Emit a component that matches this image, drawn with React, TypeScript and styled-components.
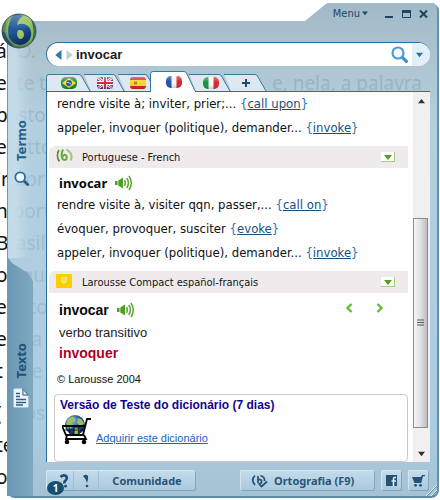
import React, { useId } from 'react';
import styled, { createGlobalStyle } from 'styled-components';

const UI_FONT = '"Noto Sans", "Open Sans", sans-serif';
const BODY_FONT = '"DejaVu Sans Condensed", "Noto Sans", sans-serif';
const ARIAL = '"Liberation Sans", Arial, sans-serif';

const GlobalStyle = createGlobalStyle`
  * { box-sizing: border-box; }
  body { margin: 0; background: #fff; font-family: ${UI_FONT}; color: #111; }
  button, input { font: inherit; color: inherit; margin: 0; padding: 0; border: 0; background: none; }
  button { cursor: pointer; }
  svg { display: block; flex: none; }
`;

const Desktop = styled.div`
  position: relative;
  display: flex;
  min-height: 100vh;
  padding: 2px 1px 2px 7px;
  overflow: hidden;
`;

const Backdrop = styled.div`
  position: absolute;
  inset: 35px 18px auto -4px;
  display: flex;
  flex-direction: column;
  color: #111;
  font-size: 19px;
  line-height: 32px;
  white-space: pre;
`;

const BackdropLine = styled.div<{ $gap?: boolean }>`
  display: flex;
  justify-content: space-between;
  height: 32px;
  margin-top: ${p => (p.$gap ? 10 : 0)}px;
`;

const Frame = styled.div`
  position: relative;
  flex: 1;
  min-width: 0;
  display: grid;
  grid-template-columns: 39px minmax(0, 1fr);
  grid-template-rows: 40px minmax(0, 1fr);
  padding-right: 7px;
  border-radius: 0 8px 8px 8px;
  border-right: 2px solid #5f93b3;
  border-bottom: 2px solid #5b8daa;
  background: linear-gradient(180deg, rgba(156, 181, 197, .95) 0, rgba(165, 188, 202, .91) 50px, rgba(171, 202, 220, .91) 120px, rgba(167, 201, 222, .94) 85%, rgba(160, 192, 210, .96) 100%);
  clip-path: polygon(0 19px, calc(100% - 134px) 19px, calc(100% - 112px) 1px, calc(100% - 5px) 1px, 100% 6px, 100% 100%, 0 100%);
`;

const TitleBar = styled.header`
  grid-column: 1 / -1;
  display: flex;
  justify-content: flex-end;
  align-items: flex-start;
  gap: 8px;
  padding: 1px 2px 0 0;
`;

const MenuButton = styled.button`
  display: flex;
  align-items: center;
  gap: 2px;
  height: 20px;
  margin-right: 9px;
  font-family: ${BODY_FONT};
  font-size: 11px;
  color: #1d4866;
`;

const WindowButton = styled.button`
  display: grid;
  place-items: center;
  width: 9px;
  height: 22px;
  color: #1d4561;
`;

const Logo = styled.div`
  position: absolute;
  left: 1px;
  top: 13px;
`;

const Rail = styled.nav`
  display: flex;
  flex-direction: column;
  border-left: 1px solid #6e9ab5;
`;

const RailTab = styled.button<{ $dark?: boolean }>`
  display: flex;
  flex-direction: column;
  align-items: center;
  gap: 10px;
  width: 26px;
  flex: ${p => (p.$dark ? '1 1 0' : '0 0 216px')};
  padding-top: ${p => (p.$dark ? 85 : 78)}px;
  color: ${p => (p.$dark ? '#1c5279' : '#23608c')};
  font-size: 13px;
  font-weight: 700;
  background: ${p =>
    p.$dark
      ? 'linear-gradient(90deg, #6c98b4, #7fa8c0)'
      : 'linear-gradient(90deg, #c3dae8, rgba(200, 222, 235, .85) 30%, rgba(190, 215, 230, .3) 70%, transparent)'};
  clip-path: ${p => (p.$dark ? 'polygon(0 0, 4px 5px, 20px 15px, 25px 23px, 25px 100%, 0 100%)' : 'none')};
`;

const RailLabel = styled.span`
  writing-mode: vertical-rl;
  rotate: 180deg;
  line-height: 18px;
`;

const Main = styled.main`
  display: flex;
  flex-direction: column;
  min-width: 0;
`;

const SearchBar = styled.form`
  display: flex;
  align-items: center;
  height: 24px;
  margin: 0;
  padding-left: 7px;
  border-top: 1px solid #2a6f9b;
  border-left: 1px solid #2a6f9b;
  border-radius: 12px;
  background: #fff;
  overflow: hidden;
`;

const SearchInput = styled.input`
  flex: 1;
  min-width: 0;
  margin-left: 2px;
  font-family: ${ARIAL};
  font-size: 13px;
  font-weight: 700;
  color: #1b1b1b;
  outline: none;
`;

const NavButton = styled.button`
  display: grid;
  place-items: center;
  width: 10px;
  height: 20px;
`;

const SearchButton = styled.button`
  display: grid;
  place-items: center;
  width: 18px;
  height: 22px;
  margin-right: 4px;
`;

const SearchMore = styled.button`
  display: grid;
  place-items: center;
  align-self: stretch;
  width: 18px;
  padding-right: 3px;
  background: #e3eff7;
`;

const Tabs = styled.div`
  display: flex;
  align-items: flex-end;
  height: 26px;
  border-bottom: 1px solid #2a6f9b;
`;

const TabButton = styled.button<{ $active?: boolean; $width: number }>`
  position: relative;
  z-index: ${p => (p.$active ? 1 : 0)};
  display: grid;
  align-items: center;
  justify-items: center;
  width: ${p => p.$width}px;
  height: ${p => (p.$active ? 21 : 17)}px;
  margin-bottom: ${p => (p.$active ? -1 : 0)}px;
  > * { grid-area: 1 / 1; }
`;

const TabShape = styled.svg`
  justify-self: start;
  align-self: end;
  overflow: visible;
`;

const TabIcon = styled.span`
  position: relative;
  padding-left: 8px;
`;

const Panel = styled.section`
  flex: 1;
  display: flex;
  border-left: 1px solid #2a6f9b;
  background: #fefefe;
`;

const Entries = styled.div`
  flex: 1;
  min-width: 0;
  padding: 0 5px 0 2px;
`;

const Line = styled.p`
  margin: 0;
  padding-left: 8px;
  font-family: ${BODY_FONT};
  font-size: 13px;
  line-height: 24px;
  white-space: nowrap;
  color: #111;
`;

const Brace = styled.span`
  color: #1c78b0;
`;

const EntryLink = styled.a`
  color: #1a4e80;
  text-decoration: underline;
`;

const DictHeader = styled.h2`
  display: flex;
  align-items: center;
  height: 22px;
  margin: 6px 0 0;
  padding: 0 13px 0 7px;
  border-radius: 6px 0 0 0;
  background: #efebed;
  font-family: ${BODY_FONT};
  font-size: 11px;
  font-weight: 400;
  color: #151515;
`;

const DictIcon = styled.span`
  width: 26px;
  margin-bottom: 3px;
`;

const DictName = styled.span`
  flex: 1;
`;

const FoldButton = styled.button`
  display: grid;
  place-items: center;
  width: 14px;
  height: 10px;
  background: #fff;
  border-right: 1px solid #a3cd85;
  border-bottom: 1px solid #a3cd85;
`;

const Headword = styled.h3<{ $arial?: boolean }>`
  display: flex;
  align-items: center;
  gap: 8px;
  height: ${p => (p.$arial ? 26 : 20)}px;
  margin: ${p => (p.$arial ? 4 : 5)}px 0 0;
  padding: 0 24px 0 10px;
  font-family: ${p => (p.$arial ? ARIAL : UI_FONT)};
  font-size: ${p => (p.$arial ? 14 : 13)}px;
  font-weight: 700;
  color: #080808;
`;

const Pager = styled.span`
  display: flex;
  gap: 23px;
  margin-left: auto;
  padding-bottom: 4px;
`;

const PagerButton = styled.button`
  display: grid;
  place-items: center;
  width: 8px;
  height: 14px;
`;

const SenseLine = styled.p<{ $strong?: boolean }>`
  margin: 0;
  padding-left: 10px;
  font-family: ${ARIAL};
  font-size: ${p => (p.$strong ? 14 : 13)}px;
  font-weight: ${p => (p.$strong ? 700 : 400)};
  line-height: 20px;
  color: ${p => (p.$strong ? '#ae0025' : '#1c1c1c')};
`;

const Copyright = styled.p`
  margin: 9px 0 8px;
  padding-left: 8px;
  font-family: ${ARIAL};
  font-size: 11px;
  line-height: 14px;
`;

const TrialBox = styled.aside`
  height: 68px;
  margin: 0 0 0 5px;
  padding: 3px 5px;
  border: 1px solid #ccc;
  border-radius: 4px;
  font-family: ${ARIAL};
  font-size: 11px;
`;

const TrialTitle = styled.strong`
  display: block;
  font-size: 12px;
  line-height: 14px;
  color: #15048f;
`;

const TrialBody = styled.div`
  display: flex;
  align-items: flex-end;
  gap: 4px;
  margin-top: 2px;
  padding-left: 2px;
`;

const TrialLink = styled.a`
  line-height: 13px;
  color: #1766c4;
`;

const ScrollBar = styled.div`
  display: flex;
  flex-direction: column;
  align-items: stretch;
  width: 17px;
  background: #f1eff0;
`;

const ScrollArrow = styled.button`
  display: grid;
  place-items: center;
  height: 18px;
`;

const ScrollTrack = styled.div`
  flex: 1;
  display: flex;
  flex-direction: column;
  justify-content: flex-end;
  padding-bottom: 16px;
`;

const ScrollThumb = styled.div`
  height: 66%;
  display: grid;
  place-items: center;
  margin-right: 2px;
  border: 1px solid #8c8c90;
  background: linear-gradient(90deg, #f6f6f8, #e0e0e5 50%, #bcbcc4);
`;

const Footer = styled.footer`
  display: flex;
  align-items: center;
  gap: 7px;
  height: 34px;
  padding: 2px 2px 0 0;
`;

const bevel = `
  background: linear-gradient(180deg, #c3dbea, #acc9dc);
  border-top: 1px solid #d5e6f0;
  border-left: 1px solid #d5e6f0;
  box-shadow: 1px 1px 0 #7ea7c0;
  border-radius: 2px;
`;

const ButtonGroup = styled.div`
  position: relative;
  display: flex;
  height: 20px;
  width: 149px;
  margin-right: auto;
  ${bevel}
`;

const GroupItem = styled.button<{ $width?: number; $first?: boolean }>`
  display: grid;
  place-items: center;
  flex: ${p => (p.$width ? `0 0 ${p.$width}px` : '1')};
  padding-left: ${p => (p.$first ? 8 : 0)}px;
  border-left: ${p => (p.$first ? '0' : '1px solid #9fbfd3')};
  font-size: 11px;
  font-weight: 700;
  line-height: 18px;
  color: #275578;
`;

const CountBadge = styled.span`
  position: absolute;
  left: 0;
  bottom: -5px;
  width: 17px;
  height: 14px;
  border-radius: 50%;
  background: #155070;
  color: #fff;
  font-size: 10px;
  font-weight: 700;
  line-height: 14px;
  text-align: center;
`;

const FooterButton = styled.button<{ $width: number }>`
  display: flex;
  align-items: center;
  justify-content: center;
  gap: 6px;
  width: ${p => p.$width}px;
  height: 20px;
  font-size: 11px;
  font-weight: 700;
  line-height: 18px;
  color: #275578;
  ${bevel}
`;

const SpellButton = styled(FooterButton)`
  justify-content: flex-start;
  padding-left: 10px;
`;

const ResizeGrip = styled.div`
  position: absolute;
  right: 0;
  bottom: 0;
`;

function Triangle({ dir, color, w = 6 }: { dir: 'up' | 'down' | 'left' | 'right'; color: string; w?: number }) {
  const turn = { down: 0, left: 90, up: 180, right: 270 }[dir];
  return (
    <svg width={w} height={w} viewBox="0 0 8 8">
      <path d="M0 2h8L4 7z" fill={color} transform={`rotate(${turn} 4 4)`} />
    </svg>
  );
}

function Lens({ size, color, rim }: { size: number; color: string; rim: string }) {
  return (
    <svg width={size} height={size} viewBox="0 0 16 16">
      <path d="M10.5 10.5l4 4" stroke={color} strokeWidth="3" strokeLinecap="round" />
      <circle cx="6.6" cy="6.6" r="5.2" fill="#eef8fd" stroke={rim} strokeWidth="2" />
      <path d="M4 6.5A3 3 0 0 1 7 4" fill="none" stroke="#fff" strokeWidth="1.4" />
    </svg>
  );
}

function BabelLogo() {
  return (
    <svg width="36" height="36" viewBox="0 0 36 36">
      <defs>
        <radialGradient id="ball" cx=".55" cy=".45" r=".6">
          <stop offset="0" stopColor="#a9d05a" />
          <stop offset=".65" stopColor="#8aba55" />
          <stop offset="1" stopColor="#2b5140" />
        </radialGradient>
        <linearGradient id="sea" x1="0" y1="0" x2=".3" y2="1">
          <stop offset="0" stopColor="#1f5583" />
          <stop offset=".5" stopColor="#225da0" />
          <stop offset="1" stopColor="#0f2f68" />
        </linearGradient>
        <linearGradient id="shine" x1="0" y1="0" x2="0" y2="1">
          <stop offset="0" stopColor="#fff" stopOpacity=".3" />
          <stop offset="1" stopColor="#fff" stopOpacity="0" />
        </linearGradient>
        <clipPath id="ballClip"><circle cx="18" cy="18" r="17" /></clipPath>
      </defs>
      <circle cx="18" cy="18" r="17" fill="url(#ball)" stroke="#314e56" strokeWidth=".8" />
      <g clipPath="url(#ballClip)">
        <path d="M0 20Q2 17 4 20Q6 27 12 32L10 36L0 30z" fill="#1f4f74" />
        <path
          fillRule="evenodd"
          d="M12 2Q17 0 22 3Q17 6 16 12Q22 9 27 13Q31 17 30 23Q28 31 20 32Q12 32 8 25Q5 13 12 2zM16.500 18Q15 24 19 26Q22.500 26 23 22Q23 18 20 17Q17.500 16.500 16.500 18z"
          fill="url(#sea)"
        />
        <path d="M29 4Q34 10 35 18Q35 25 30 31Q33 24 32.500 17Q32 10 29 4z" fill="#1d4a60" opacity=".7" />
      </g>
      <ellipse cx="18" cy="9" rx="13" ry="7" fill="url(#shine)" />
    </svg>
  );
}

type FlagKind = 'br' | 'gb' | 'es' | 'fr' | 'it';

function Flag({ kind }: { kind: FlagKind }) {
  const id = useId();
  return (
    <svg width="16" height="12" viewBox="0 0 16 12">
      <defs>
        <clipPath id={id}><rect width="16" height="12" rx={kind === 'es' || kind === 'gb' ? 3 : 5} /></clipPath>
        <linearGradient id={`${id}g`} x1="0" y1="0" x2="0" y2="1">
          <stop offset="0" stopColor="#fff" stopOpacity=".35" />
          <stop offset=".5" stopColor="#fff" stopOpacity="0" />
          <stop offset="1" stopColor="#000" stopOpacity=".2" />
        </linearGradient>
      </defs>
      <g clipPath={`url(#${id})`}>
        {kind === 'br' && (
          <>
            <path d="M0 0h16v12H0z" fill="#218a35" />
            <path d="M8 1l7 5-7 5-7-5z" fill="#f5e02c" />
            <circle cx="8" cy="6" r="2.9" fill="#1d4c9b" />
            <path d="M5.5 5.3q3 0 4.8 2" stroke="#fff" strokeWidth=".8" fill="none" />
          </>
        )}
        {kind === 'gb' && (
          <>
            <path d="M0 0h16v12H0z" fill="#2d4898" />
            <path d="M0 0l16 12M16 0L0 12" stroke="#fff" strokeWidth="2.6" />
            <path d="M0 0l16 12M16 0L0 12" stroke="#d5263d" strokeWidth="1" />
            <path d="M8 0v12M0 6h16" stroke="#fff" strokeWidth="4" />
            <path d="M8 0v12M0 6h16" stroke="#d5263d" strokeWidth="2.2" />
          </>
        )}
        {kind === 'es' && (
          <>
            <path d="M0 0h16v12H0z" fill="#d9231f" />
            <path d="M0 3h16v6H0z" fill="#fbd62b" />
            <path d="M4 4.5h3v3H4z" fill="#cf722b" />
          </>
        )}
        {(kind === 'fr' || kind === 'it') && (
          <>
            <path d="M0 0h16v12H0z" fill="#f6f8fa" />
            <path d="M0 0h5.5v12H0z" fill={kind === 'fr' ? '#1a52b0' : '#15923c'} />
            <path d="M10.5 0H16v12h-5.5z" fill="#d8232b" />
          </>
        )}
        <path d="M0 0h16v12H0z" fill={`url(#${id}g)`} />
      </g>
    </svg>
  );
}

function TabOutline({ width, active, first }: { width: number; active?: boolean; first?: boolean }) {
  const h = active ? 21 : 17;
  const left = active || first ? `M.5 ${h}V3Q.5 .5 3 .5` : `M0 .5`;
  const d = `${left}H${width - 5}Q${width - 3} .5 ${width - 2} 3L${width + 6} ${h - (active ? 1 : 0)}`;
  return (
    <TabShape width={width} height={h} aria-hidden>
      <path d={`${d}V${h}H${first || active ? 0 : 7}Z`} fill={active ? '#fff' : '#dce9f1'} />
      <path d={d} fill="none" stroke="#3b789e" />
    </TabShape>
  );
}

function Plus() {
  return <svg width="10" height="10"><path d="M5 1v8M1 5h8" stroke="#204a69" strokeWidth="2" /></svg>;
}

function Speaker() {
  return (
    <svg width="18" height="16" viewBox="0 0 18 16" fill="none" stroke="#5aa52f" strokeWidth="1.5">
      <path d="M0 6h2.5v4H0zM3.3 5.5L8 2.5v11L3.3 10.5z" fill="#4f9e27" stroke="none" />
      <path d="M9.5 5.2q1.6 2.8 0 5.6M11.8 3q3.2 5 0 10M14 1q4.6 7 0 14" />
    </svg>
  );
}

function BabelMark() {
  return (
    <svg width="17" height="16" viewBox="0 0 17 16" fill="none" stroke="#67ad38">
      <path d="M3 2Q-.5 8 3.5 13.5" stroke="#4c8d2c" strokeWidth="1.6" />
      <path d="M7 1.500Q4.500 7 6.500 11M6.500 8.500Q8 5.500 10.500 8Q11.500 11.500 8.500 12Q6 12 6.500 8.500z" strokeWidth="2" />
      <path d="M10.500 1.500Q18 6 14.500 12.500" stroke="#9bc87c" strokeWidth="2" />
    </svg>
  );
}

function LarousseMark() {
  return (
    <svg width="16" height="14" viewBox="0 0 16 14">
      <path d="M0 0h16v14H0z" fill="#fbcf00" />
      <path d="M5.500 3v4q0 1.500 1.500 1.500V3M9 3v5.500q1.500 0 1.500-1.500V3M8 2.500V10" fill="none" stroke="#fff4b0" strokeWidth=".8" />
    </svg>
  );
}

function Chevron({ dir }: { dir: 'left' | 'right' }) {
  return (
    <svg width="8" height="10" viewBox="0 0 8 10">
      <path d={dir === 'left' ? 'M6.500 1L2.500 5l4 4' : 'M1.500 1l4 4-4 4'} fill="none" stroke="#66bd30" strokeWidth="2.400" />
    </svg>
  );
}

function GlobeCart() {
  return (
    <svg width="30" height="31" viewBox="0 0 30 31">
      <defs>
        <radialGradient id="globe" cx=".4" cy=".3" r=".75">
          <stop offset="0" stopColor="#8dbbe4" />
          <stop offset=".5" stopColor="#24579b" />
          <stop offset="1" stopColor="#0a1c46" />
        </radialGradient>
      </defs>
      <circle cx="13" cy="11" r="10" fill="url(#globe)" />
      <path d="M5 6Q8 2 12 3L14 6L10 8L11 12L7 16Q3 12 5 6zM16 4Q21 5 22 10L18 12L15 9zM13 14l5 1-2 5-4 0z" fill="#9dbd62" />
      <path d="M0 12h23M29 5h-4l-4 16H4L0 12M5 21l-1 4h20l-2-4" fill="none" stroke="#080808" strokeWidth="1.800" />
      <path d="M2 16h20M7 13l1 8M12 13v8M17 13l-1 8" fill="none" stroke="#080808" strokeWidth=".8" />
      <circle cx="5" cy="28" r="2.300" fill="#080808" />
      <circle cx="22" cy="28" r="2.300" fill="#080808" />
    </svg>
  );
}

function PageIcon() {
  return (
    <svg width="16" height="20" viewBox="0 0 16 20">
      <path d="M1 1h8v7h6v11H1z" fill="#edf7fc" stroke="#dcecf5" />
      <path d="M10 1l5 6h-5z" fill="#d5e8f3" stroke="#315f7d" strokeWidth=".8" />
      <path d="M3 5.500h4M3 8.500h4M3 11.500h10M3 14.500h10M3 17h7" stroke="#315f7d" strokeWidth="1.300" />
    </svg>
  );
}

function Question() {
  return (
    <svg width="12" height="14" viewBox="0 0 12 14">
      <path d="M2.500 3Q5 .5 8 2Q10 4 7.500 6.500Q6 7.500 6.500 9.500" fill="none" stroke="#1c4f77" strokeWidth="2.600" />
      <circle cx="7.500" cy="12.200" r="1.400" fill="#1c4f77" />
    </svg>
  );
}

function Exclamation() {
  return (
    <svg width="8" height="14" viewBox="0 0 8 14">
      <path d="M1 2Q4-.5 6 2Q6.500 5 5 9Q4.500 5 1 2z" fill="#1c4f77" />
      <circle cx="5" cy="12" r="1.300" fill="#1c4f77" />
    </svg>
  );
}

function SpellMark() {
  return (
    <svg width="17" height="14" viewBox="0 0 17 14" fill="none" stroke="#235275" strokeWidth="1.700">
      <path d="M4 1.500Q-.5 6 4 11M7 2v7M7 6.500Q9 4.500 10.500 6.500Q11 10 8 9.500M9.500 1.500Q14 3 13.500 7M7.500 9.500l3 3 5.500-5" />
    </svg>
  );
}

function FacebookMark() {
  return (
    <svg width="11" height="11" viewBox="0 0 11 11">
      <path d="M0 0h11v11H0z" fill="#235275" />
      <path d="M10 2.500H8.500Q7.500 2.500 7.500 4v7M5.500 6H10" fill="none" stroke="#dcebf4" strokeWidth="1.600" />
    </svg>
  );
}

function CartMark() {
  return (
    <svg width="13" height="12" viewBox="0 0 13 12">
      <path d="M0 2h9l1-2h3v1.300h-2L9.200 8H2.500z" fill="#235275" />
      <circle cx="3.500" cy="10.300" r="1.400" fill="#235275" />
      <circle cx="8.500" cy="10.300" r="1.400" fill="#235275" />
    </svg>
  );
}

const BACKDROP_LINES = [
  ['á. O.', ''], ['e  te t', 'e, nela, a palavra'], ['pastor', ''], ['el etto', ''], [' r por', ''], ['n port', ''],
  ['Brasil', ''], ['os gua', ''], ['e  rito', ''], ['e    ja', ''], ['t    se', ''],
];
const BACKDROP_TAIL = ['( mos', 'te  s', 'o'];

const TABS: { kind: FlagKind; label: string; width: number }[] = [
  { kind: 'br', label: 'Português', width: 38 },
  { kind: 'gb', label: 'English', width: 34 },
  { kind: 'es', label: 'Español', width: 32 },
  { kind: 'fr', label: 'Français', width: 39 },
  { kind: 'it', label: 'Italiano', width: 35 },
];

function Translation({ text, link }: { text: string; link: string }) {
  return (
    <Line>
      {text} <Brace>{'{'}</Brace>
      <EntryLink href="#entry">{link}</EntryLink>
      <Brace>{'}'}</Brace>
    </Line>
  );
}

function Dictionary({ icon, name }: { icon: React.ReactNode; name: string }) {
  return (
    <DictHeader>
      <DictIcon>{icon}</DictIcon>
      <DictName>{name}</DictName>
      <FoldButton aria-label={`Recolher ${name}`}><Triangle dir="down" color="#4f9e27" w={8} /></FoldButton>
    </DictHeader>
  );
}

export default function App() {
  return (
    <>
      <GlobalStyle />
      <Desktop>
        <Backdrop aria-hidden>
          {BACKDROP_LINES.map(([start, end]) => (
            <BackdropLine key={start}><span>{start}</span><span>{end}</span></BackdropLine>
          ))}
          {BACKDROP_TAIL.map((text, i) => (
            <BackdropLine key={text} $gap={i === 0}>{text}</BackdropLine>
          ))}
        </Backdrop>
        <Frame>
          <TitleBar>
            <MenuButton>Menu<Triangle dir="down" color="#1d4866" /></MenuButton>
            <WindowButton aria-label="Minimizar">
              <svg width="9" height="10"><path d="M0 8h8" stroke="currentColor" strokeWidth="2" /></svg>
            </WindowButton>
            <WindowButton aria-label="Maximizar">
              <svg width="9" height="10"><path d="M.5 2v6.500h8V2" fill="none" stroke="currentColor" /><path d="M0 1h9v3H0z" fill="currentColor" /></svg>
            </WindowButton>
            <WindowButton aria-label="Fechar">
              <svg width="9" height="10"><path d="M1 1.500l7 7M8 1.500l-7 7" stroke="currentColor" strokeWidth="2" /></svg>
            </WindowButton>
          </TitleBar>
          <Rail>
            <RailTab><RailLabel>Termo</RailLabel><Lens size={15} color="#215f90" rim="#2a6da0" /></RailTab>
            <RailTab $dark><RailLabel>Texto</RailLabel><PageIcon /></RailTab>
          </Rail>
          <Main>
            <SearchBar onSubmit={e => e.preventDefault()}>
              <NavButton type="button" aria-label="Voltar"><Triangle dir="left" color="#2b7ab5" w={10} /></NavButton>
              <NavButton type="button" aria-label="Avançar"><Triangle dir="right" color="#c6cdd2" w={10} /></NavButton>
              <SearchInput aria-label="Termo" defaultValue="invocar" />
              <SearchButton aria-label="Buscar"><Lens size={17} color="#3b8fd0" rim="#4a9bd8" /></SearchButton>
              <SearchMore type="button" aria-label="Histórico"><Triangle dir="down" color="#2273a8" w={7} /></SearchMore>
            </SearchBar>
            <Tabs>
              {TABS.map((tab, i) => (
                <TabButton key={tab.kind} $width={tab.width} $active={tab.kind === 'fr'} aria-label={tab.label}>
                  <TabOutline width={tab.width} active={tab.kind === 'fr'} first={i === 0} />
                  <TabIcon><Flag kind={tab.kind} /></TabIcon>
                </TabButton>
              ))}
              <TabButton $width={36} aria-label="Adicionar">
                <TabOutline width={36} />
                <TabIcon><Plus /></TabIcon>
              </TabButton>
            </Tabs>
            <Panel>
              <Entries>
                <Translation text="rendre visite à; inviter, prier;..." link="call upon" />
                <Translation text="appeler, invoquer (politique), demander..." link="invoke" />
                <Dictionary icon={<BabelMark />} name="Portuguese - French" />
                <Headword>invocar <Speaker /></Headword>
                <Translation text="rendre visite à, visiter qqn, passer,..." link="call on" />
                <Translation text="évoquer, provoquer, susciter" link="evoke" />
                <Translation text="appeler, invoquer (politique), demander..." link="invoke" />
                <Dictionary icon={<LarousseMark />} name="Larousse Compact español-français" />
                <Headword $arial>
                  invocar <Speaker />
                  <Pager>
                    <PagerButton aria-label="Anterior"><Chevron dir="left" /></PagerButton>
                    <PagerButton aria-label="Próximo"><Chevron dir="right" /></PagerButton>
                  </Pager>
                </Headword>
                <SenseLine>verbo transitivo</SenseLine>
                <SenseLine $strong>invoquer</SenseLine>
                <Copyright>© Larousse 2004</Copyright>
                <TrialBox>
                  <TrialTitle>Versão de Teste do dicionário (7 dias)</TrialTitle>
                  <TrialBody>
                    <GlobeCart />
                    <TrialLink href="#comprar">Adquirir este dicionário</TrialLink>
                  </TrialBody>
                </TrialBox>
              </Entries>
              <ScrollBar>
                <ScrollArrow aria-label="Subir"><Triangle dir="up" color="#333" w={7} /></ScrollArrow>
                <ScrollTrack>
                  <ScrollThumb>
                    <svg width="8" height="8"><path d="M0 1h7M0 3.500h7M0 6h7" stroke="#555" /></svg>
                  </ScrollThumb>
                </ScrollTrack>
                <ScrollArrow aria-label="Descer"><Triangle dir="down" color="#333" w={7} /></ScrollArrow>
              </ScrollBar>
            </Panel>
            <Footer>
              <ButtonGroup>
                <GroupItem $width={26} $first aria-label="Ajuda"><Question /></GroupItem>
                <GroupItem $width={25} aria-label="Avisos"><Exclamation /></GroupItem>
                <GroupItem>Comunidade</GroupItem>
                <CountBadge>1</CountBadge>
              </ButtonGroup>
              <SpellButton $width={134}><SpellMark />Ortografia (F9)</SpellButton>
              <FooterButton $width={20} aria-label="Facebook"><FacebookMark /></FooterButton>
              <FooterButton $width={20} aria-label="Loja"><CartMark /></FooterButton>
            </Footer>
          </Main>
          <ResizeGrip>
            <svg width="12" height="12"><path d="M1 12L12 1M6 12l6-6" stroke="#e1eff7" /><path d="M2 12L12 2M7 12l5-5" stroke="#5b8daa" /></svg>
          </ResizeGrip>
        </Frame>
        <Logo><BabelLogo /></Logo>
      </Desktop>
    </>
  );
}
